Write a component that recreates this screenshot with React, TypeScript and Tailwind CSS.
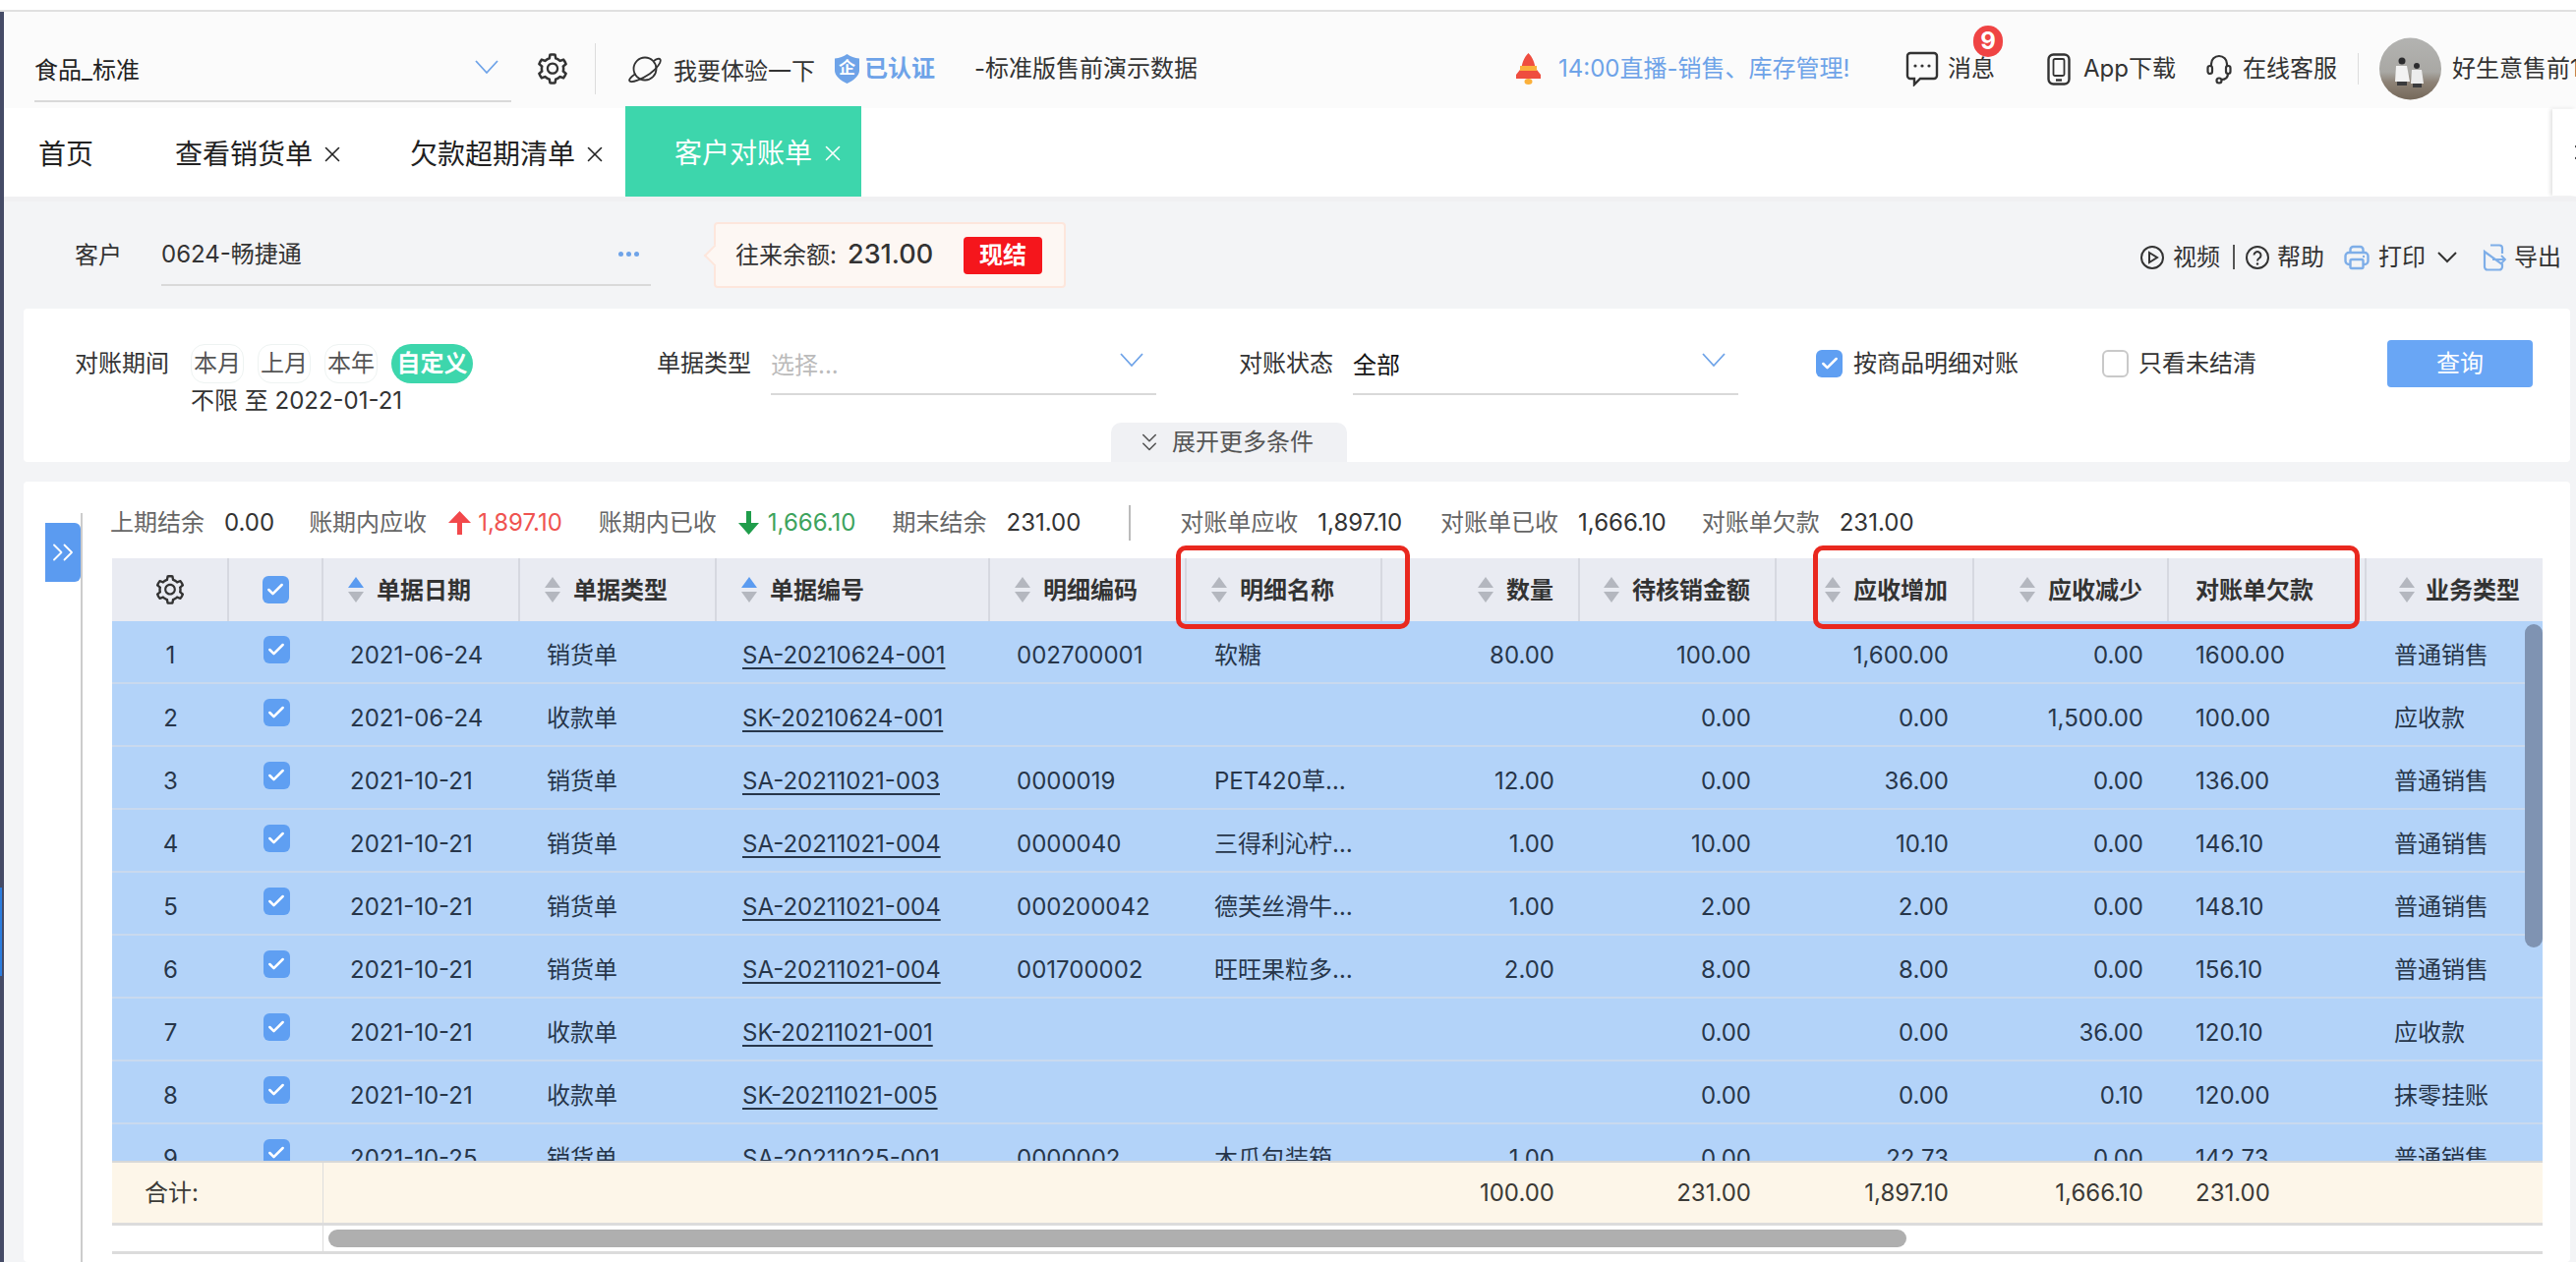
import React from "react";
import { AiOutlineSetting } from "react-icons/ai";
import { Check, ChevronRight, ChevronsDown, ChevronsRight, X } from "lucide-react";

type Row = {
  no: number;
  date: string;
  type: string;
  code: string;
  item: string;
  name: string;
  qty: string;
  pending: string;
  add: string;
  sub: string;
  owed: string;
  biz: string;
};

const rows: Row[] = [
  { no: 1, date: "2021-06-24", type: "销货单", code: "SA-20210624-001", item: "002700001", name: "软糖", qty: "80.00", pending: "100.00", add: "1,600.00", sub: "0.00", owed: "1600.00", biz: "普通销售" },
  { no: 2, date: "2021-06-24", type: "收款单", code: "SK-20210624-001", item: "", name: "", qty: "", pending: "0.00", add: "0.00", sub: "1,500.00", owed: "100.00", biz: "应收款" },
  { no: 3, date: "2021-10-21", type: "销货单", code: "SA-20211021-003", item: "0000019", name: "PET420草…", qty: "12.00", pending: "0.00", add: "36.00", sub: "0.00", owed: "136.00", biz: "普通销售" },
  { no: 4, date: "2021-10-21", type: "销货单", code: "SA-20211021-004", item: "0000040", name: "三得利沁柠…", qty: "1.00", pending: "10.00", add: "10.10", sub: "0.00", owed: "146.10", biz: "普通销售" },
  { no: 5, date: "2021-10-21", type: "销货单", code: "SA-20211021-004", item: "000200042", name: "德芙丝滑牛…", qty: "1.00", pending: "2.00", add: "2.00", sub: "0.00", owed: "148.10", biz: "普通销售" },
  { no: 6, date: "2021-10-21", type: "销货单", code: "SA-20211021-004", item: "001700002", name: "旺旺果粒多…", qty: "2.00", pending: "8.00", add: "8.00", sub: "0.00", owed: "156.10", biz: "普通销售" },
  { no: 7, date: "2021-10-21", type: "收款单", code: "SK-20211021-001", item: "", name: "", qty: "", pending: "0.00", add: "0.00", sub: "36.00", owed: "120.10", biz: "应收款" },
  { no: 8, date: "2021-10-21", type: "收款单", code: "SK-20211021-005", item: "", name: "", qty: "", pending: "0.00", add: "0.00", sub: "0.10", owed: "120.00", biz: "抹零挂账" },
  { no: 9, date: "2021-10-25", type: "销货单", code: "SA-20211025-001", item: "0000002", name: "木瓜包装箱", qty: "1.00", pending: "0.00", add: "22.73", sub: "0.00", owed: "142.73", biz: "普通销售" },
];

const gridCols =
  "grid grid-cols-[119px_96px_200px_200px_278px_200px_199px_201px_200px_201px_198px_201px_179px]";

function Caret({ className = "" }: { className?: string }) {
  return (
    <svg width="26" height="16" viewBox="0 0 26 16" className={`shrink-0 ${className}`} fill="none" stroke="#6ea3e8" strokeWidth="1.8">
      <polyline points="2,2 13,14 24,2" />
    </svg>
  );
}

function SortIcon({ active = false }: { active?: boolean }) {
  return (
    <svg width="16" height="26" viewBox="0 0 16 26" className="shrink-0">
      <polygon points="8,0 16,11 0,11" fill={active ? "#5b9bf0" : "#b4b7bf"} />
      <polygon points="0,15 16,15 8,26" fill="#b4b7bf" />
    </svg>
  );
}

function CheckBox({ checked = true, className = "" }: { checked?: boolean; className?: string }) {
  if (!checked) {
    return <span className={`h-[28px] w-[27px] shrink-0 rounded-[6px] border-2 border-[#c9c9c9] bg-white ${className}`} />;
  }
  return (
    <span className={`flex h-[28px] w-[27px] shrink-0 items-center justify-center rounded-[6px] bg-[#5f9ff2] ${className}`}>
      <Check size={20} color="#fff" strokeWidth={3} />
    </span>
  );
}

function Planet() {
  return (
    <svg width="34" height="30" viewBox="0 0 34 30" fill="none" stroke="#333" strokeWidth="1.800" className="ml-[33px]">
      <circle cx="17" cy="15" r="11.500" />
      <path d="M7.500 20C3 23 0 26 1.500 27.500 3.500 29.500 14 25.500 22 20 29 15 34 8 32.500 5.500 31.500 4 28.500 5 26 7" />
    </svg>
  );
}

function ShieldMark() {
  return (
    <svg width="25" height="30" viewBox="0 0 25 30" className="ml-[20px]">
      <path d="M12.500 0C16 2.500 20 4 25 4.500V17c0 5-6 10-12.500 13C6 27 0 22 0 17V4.500C5 4 9 2.500 12.500 0z" fill="#6ea3e8" />
      <text x="12.500" y="20" textAnchor="middle" fontSize="17" fontWeight="600" fill="#fff" fontFamily="Noto Sans CJK SC">企</text>
    </svg>
  );
}

function RocketBell() {
  return (
    <svg width="27" height="32" viewBox="0 0 27 32" className="ml-[328px]">
      <path d="M13.500 0C9 4 7 11 6.500 15L1 22v4h25v-4l-5.500-7C20 11 18 4 13.500 0z" fill="#ef4d3f" />
      <rect x="5" y="13" width="17" height="5" fill="#fbb03b" />
      <ellipse cx="13.500" cy="29" rx="4" ry="3" fill="#fbb03b" />
    </svg>
  );
}

function Message() {
  return (
    <svg width="34" height="36" viewBox="0 0 34 36" fill="none" stroke="#333" strokeWidth="2.400" className="ml-[49px]">
      <path d="M5 2h24a3 3 0 0 1 3 3v20a3 3 0 0 1-3 3H15l-6 6v-6H5a3 3 0 0 1-3-3V5a3 3 0 0 1 3-3z" />
      <circle cx="10" cy="15" r="1.600" fill="#333" stroke="none" />
      <circle cx="17" cy="15" r="1.600" fill="#333" stroke="none" />
      <circle cx="24" cy="15" r="1.600" fill="#333" stroke="none" />
    </svg>
  );
}

function Phone() {
  return (
    <svg width="24" height="33" viewBox="0 0 24 33" fill="none" stroke="#333" strokeWidth="2.400" className="ml-[53px]">
      <rect x="1.500" y="1.500" width="21" height="30" rx="5" />
      <rect x="6.500" y="6" width="11" height="17" rx="1.500" strokeWidth="1.800" />
      <line x1="9" y1="27.500" x2="15" y2="27.500" />
    </svg>
  );
}

function Headset() {
  return (
    <svg width="26" height="32" viewBox="0 0 26 32" fill="none" stroke="#333" strokeWidth="2.200" className="ml-[33px]">
      <path d="M5 14V11a8 8 0 0 1 16 0v3" />
      <rect x="1.500" y="13" width="4.500" height="8" rx="2.200" />
      <rect x="20" y="13" width="4.500" height="8" rx="2.200" />
      <path d="M22 21c0 4-3 6-7 6" />
      <circle cx="13" cy="28" r="2.500" />
    </svg>
  );
}

function Avatar() {
  return (
    <svg width="63" height="64" viewBox="0 0 63 64" className="ml-[21px]">
      <defs>
        <linearGradient id="sky" x1="0" y1="0" x2="0" y2="1">
          <stop offset="0" stopColor="#b3b3b1" />
          <stop offset="0.55" stopColor="#a9a8a4" />
          <stop offset="0.72" stopColor="#8d8276" />
          <stop offset="1" stopColor="#75685a" />
        </linearGradient>
      </defs>
      <circle cx="31.500" cy="32" r="31.500" fill="url(#sky)" />
      <circle cx="23" cy="24" r="3.500" fill="#2c2c2e" />
      <path d="M17 29h11l3 16H16z" fill="#f2f2f2" />
      <path d="M18 45h10v4H18z" fill="#3b3b3d" />
      <circle cx="38" cy="29" r="3" fill="#2c2c2e" />
      <path d="M33 33h10l2 14H32z" fill="#ececec" />
      <path d="M34 47h9v4h-9z" fill="#3b3b3d" />
    </svg>
  );
}

function PlayIcon() {
  return (
    <svg width="24" height="24" viewBox="0 0 24 24" fill="none" stroke="#333" strokeWidth="2">
      <circle cx="12" cy="12" r="11" />
      <polygon points="9,7 17,12 9,17" />
    </svg>
  );
}

function HelpIcon() {
  return (
    <svg width="24" height="24" viewBox="0 0 24 24" fill="none" stroke="#333" strokeWidth="2" className="ml-[11px]">
      <circle cx="12" cy="12" r="11" />
      <path d="M8.500 9.500a3.500 3.500 0 1 1 5.500 3c-1.300.9-2 1.500-2 3" />
      <circle cx="12" cy="18.500" r="1.200" fill="#333" stroke="none" />
    </svg>
  );
}

function PrintIcon() {
  return (
    <svg width="26" height="26" viewBox="0 0 26 26" fill="none" stroke="#7eaee8" strokeWidth="2.400" className="ml-[20px]">
      <path d="M6.500 8V5a3 3 0 0 1 3-3h7a3 3 0 0 1 3 3v3" />
      <path d="M6 20H5a3.500 3.500 0 0 1-3.500-3.500v-5A3.500 3.500 0 0 1 5 8h16a3.500 3.500 0 0 1 3.500 3.500v5A3.500 3.500 0 0 1 21 20h-1" />
      <rect x="6.500" y="15" width="13" height="9" rx="1.500" />
      <circle cx="20" cy="12" r="1.200" fill="#7eaee8" stroke="none" />
    </svg>
  );
}

function ExportIcon() {
  return (
    <svg width="25" height="28" viewBox="0 0 25 28" fill="none" stroke="#7eaee8" strokeWidth="2.200" className="ml-[25px]">
      <path d="M8 1.500h9a3 3 0 0 1 3 3V10M20 21v2.500a3 3 0 0 1-3 3H5a3 3 0 0 1-3-3V8z" />
      <path d="M10 16h13M19 12l4 4-4 4" strokeWidth="1.800" />
    </svg>
  );
}

function UpArrow() {
  return (
    <svg width="23" height="24" viewBox="0 0 23 24" className="ml-[22px]">
      <polygon points="11.500,0 23,12 14,12 14,24 9,24 9,12 0,12" fill="#f2484b" />
    </svg>
  );
}

function DownArrow() {
  return (
    <svg width="21" height="24" viewBox="0 0 21 24" className="ml-[22px]">
      <polygon points="8,0 13,0 13,12 21,12 10.500,24 0,12 8,12" fill="#1f9d4b" />
    </svg>
  );
}

function Pill({ label, active = false }: { label: string; active?: boolean }) {
  if (active) {
    return (
      <span className="flex h-[40px] w-[83px] items-center justify-center rounded-[20px] bg-[#3dd6ac] text-[24px] font-semibold text-white">
        {label}
      </span>
    );
  }
  return (
    <span className="flex h-[40px] w-[54px] items-center justify-center rounded-[14px] border border-[#eef3f2] text-[24px] text-[#555]">
      {label}
    </span>
  );
}

function HeadCell({ label, sort, active, right, pad }: { label: string; sort?: boolean; active?: boolean; right?: boolean; pad: string }) {
  return (
    <div className={`flex h-full items-center border-r-2 border-[#d6d8e0] ${right ? "justify-end" : ""} ${pad}`}>
      {sort && <SortIcon active={active} />}
      <span className="ml-[13px] whitespace-nowrap pt-[2px] text-[24px] font-semibold text-[#333]">{label}</span>
    </div>
  );
}

export default function App() {
  return (
    <div className="relative flex h-[1284px] w-[2620px] flex-col overflow-hidden bg-white font-['Inter','Noto_Sans_CJK_SC',sans-serif] text-[24px] text-[#333]">
      <div className="h-[12px] shrink-0 border-b-2 border-[#e0e0e0] bg-white" />
      <div className="flex min-h-0 flex-1 flex-col border-l-4 border-[#454b66] bg-[#f3f4f6]">
        {/* top bar */}
        <div className="flex h-[98px] shrink-0 items-center overflow-hidden bg-[#fbfbfb] pt-[18px] pl-[31px] [&>*]:shrink-0">
          <div className="mt-[22px] flex h-[52px] w-[485px] items-start justify-between self-start border-b-2 border-[#d9d9d9] pr-[12px]">
            <span className="text-[24px] leading-[40px] text-[#222]">食品_标准</span>
            <Caret className="mt-[8px]" />
          </div>
          <AiOutlineSetting size={36} color="#333" className="ml-[24px]" />
          <span className="ml-[25px] h-[52px] w-px bg-[#ddd]" />
          <Planet />
          <span className="ml-[12px] mt-[5px] w-[144px] whitespace-nowrap">我要体验一下</span>
          <ShieldMark />
          <span className="ml-[5px] w-[72px] whitespace-nowrap font-semibold text-[#6ea3e8]">已认证</span>
          <span className="ml-[40px] w-[222px] whitespace-nowrap">-标准版售前演示数据</span>
          <RocketBell />
          <span className="ml-[17px] w-[304px] whitespace-nowrap text-[#6ea3e8]">14:00直播-销售、库存管理!</span>
          <Message />
          <span className="relative ml-[9px] w-[48px] whitespace-nowrap">
            消息
            <span className="absolute left-[26px] top-[-26px] flex h-[32px] w-[30px] items-center justify-center rounded-full bg-[#ef4444] text-[24px] font-bold text-white">
              9
            </span>
          </span>
          <Phone />
          <span className="ml-[13px] w-[92px] whitespace-nowrap">App下载</span>
          <Headset />
          <span className="ml-[11px] w-[98px] whitespace-nowrap">在线客服</span>
          <span className="ml-[19px] h-[32px] w-px bg-[#ddd]" />
          <Avatar />
          <span className="ml-[11px] whitespace-nowrap">好生意售前1</span>
        </div>

        {/* tabs */}
        <div className="flex h-[90px] shrink-0 items-center bg-white pl-[35px] text-[28px] text-[#222]">
          <span className="w-[56px] whitespace-nowrap pt-[4px]">首页</span>
          <span className="ml-[83px] whitespace-nowrap pt-[4px]">查看销货单</span>
          <X size={26} strokeWidth={1.5} className="ml-[7px] mt-[4px]" />
          <span className="ml-[66px] whitespace-nowrap pt-[4px]">欠款超期清单</span>
          <X size={26} strokeWidth={1.5} className="ml-[7px] mt-[4px]" />
          <div className="ml-[18px] mt-[-2px] flex h-[92px] w-[240px] items-center self-end bg-[#3dd6ac] pl-[50px] text-white">
            <span className="whitespace-nowrap pt-[4px]">客户对账单</span>
            <X size={26} strokeWidth={1.5} className="ml-[8px] mt-[4px]" />
          </div>
          <div className="ml-auto flex h-[88px] w-[24px] items-center overflow-hidden bg-white pl-[15px] shadow-[-2px_0_4px_rgba(0,0,0,0.12)]">
            <ChevronRight size={24} className="shrink-0" />
          </div>
        </div>
        <div className="h-[5px] shrink-0 bg-[#f0f0f2]" />

        {/* customer row */}
        <div className="flex h-[109px] shrink-0 items-center pl-[72px] pr-[15px]">
          <span className="w-[48px]">客户</span>
          <div className="ml-[40px] flex h-[62px] w-[498px] items-center justify-between border-b-2 border-[#d9d9d9] pr-[12px]">
            <span>0624-畅捷通</span>
            <span className="flex gap-[3px]">
              <i className="h-[5px] w-[5px] rounded-full bg-[#6ea3e8]" />
              <i className="h-[5px] w-[5px] rounded-full bg-[#6ea3e8]" />
              <i className="h-[5px] w-[5px] rounded-full bg-[#6ea3e8]" />
            </span>
          </div>
          <div className="relative ml-[64px] flex h-[67px] w-[358px] items-center rounded-[4px] border-2 border-[#fde6dc] bg-[#fdf7f3] pl-[20px]">
            <span className="absolute left-[-9px] top-[24px] h-[16px] w-[16px] rotate-45 border-b-2 border-l-2 border-[#fde6dc] bg-[#fdf7f3]" />
            <span className="w-[100px] whitespace-nowrap">往来余额:</span>
            <span className="ml-[14px] w-[86px] text-[27px] font-medium">231.00</span>
            <span className="ml-[32px] flex h-[38px] w-[80px] items-center justify-center rounded-[4px] bg-[#f5161c] font-semibold text-white">现结</span>
          </div>
          <div className="ml-auto flex items-center pt-[4px]">
            <PlayIcon />
            <span className="ml-[9px]">视频</span>
            <span className="ml-[13px] h-[25px] w-[2px] bg-[#555]" />
            <HelpIcon />
            <span className="ml-[8px]">帮助</span>
            <PrintIcon />
            <span className="ml-[9px]">打印</span>
            <svg width="22" height="13" viewBox="0 0 22 13" fill="none" stroke="#333" strokeWidth="2" className="ml-[11px]">
              <polyline points="2,2 11,11 20,2" />
            </svg>
            <ExportIcon />
            <span className="ml-[7px]">导出</span>
          </div>
        </div>

        {/* filter card */}
        <div className="ml-[20px] flex h-[156px] w-[2590px] shrink-0 flex-col rounded-[4px] bg-white">
          <div className="flex h-[116px] items-start pl-[52px] pt-[36px]">
            <span className="w-[96px] leading-[40px]">对账期间</span>
            <div className="ml-[22px]">
              <div className="flex gap-[14px]">
                <Pill label="本月" />
                <Pill label="上月" />
                <Pill label="本年" />
                <Pill label="自定义" active />
              </div>
              <div className="whitespace-nowrap leading-[36px]">不限 至 2022-01-21</div>
            </div>
            <span className="ml-[187px] w-[96px] leading-[40px]">单据类型</span>
            <div className="ml-[20px] flex h-[52px] w-[392px] items-start justify-between border-b-2 border-[#d9d9d9] pr-[12px]">
              <span className="leading-[44px] text-[#bbb]">选择...</span>
              <Caret className="mt-[8px]" />
            </div>
            <span className="ml-[84px] w-[96px] leading-[40px]">对账状态</span>
            <div className="ml-[20px] flex h-[52px] w-[392px] items-start justify-between border-b-2 border-[#d9d9d9] pr-[12px]">
              <span className="leading-[44px] text-[#111]">全部</span>
              <Caret className="mt-[8px]" />
            </div>
            <CheckBox className="ml-[79px] mt-[6px]" />
            <span className="ml-[11px] w-[168px] whitespace-nowrap leading-[40px]">按商品明细对账</span>
            <CheckBox checked={false} className="ml-[85px] mt-[6px]" />
            <span className="ml-[10px] w-[120px] whitespace-nowrap leading-[40px]">只看未结清</span>
            <button className="ml-[133px] mt-[-4px] h-[48px] w-[148px] rounded-[4px] bg-[#69a6f5] text-[24px] text-white">查询</button>
          </div>
          <div className="flex flex-1 pl-[1106px]">
            <div className="flex h-[40px] w-[240px] items-center gap-[8px] rounded-t-[10px] bg-[#f0f1f4] pl-[24px] text-[#555]">
              <ChevronsDown size={30} strokeWidth={1.3} />
              <span className="whitespace-nowrap">展开更多条件</span>
            </div>
          </div>
        </div>

        {/* table card */}
        <div className="ml-[20px] mt-[20px] flex min-h-0 w-[2590px] flex-1 rounded-[4px] bg-white">
          <div className="ml-[22px] mt-[32px] w-[38px] shrink-0 border-r-2 border-[#cccccc]">
            <div className="mt-[10px] flex h-[60px] w-[36px] items-center justify-center rounded-r-[6px] bg-[#5b9bf0]">
              <ChevronsRight size={36} color="#fff" strokeWidth={1.2} />
            </div>
          </div>
          <div className="ml-[30px] w-[2472px] shrink-0">
            <div className="mt-[24px] flex h-[36px] items-center whitespace-nowrap text-[#666]">
              <span className="ml-[-2px]">上期结余</span>
              <span className="ml-[20px] text-[#333]">0.00</span>
              <span className="ml-[35px]">账期内应收</span>
              <UpArrow />
              <span className="ml-[7px] text-[#ef5350]">1,897.10</span>
              <span className="ml-[37px]">账期内已收</span>
              <DownArrow />
              <span className="ml-[9px] text-[#3da35d]">1,666.10</span>
              <span className="ml-[37px]">期末结余</span>
              <span className="ml-[20px] text-[#333]">231.00</span>
              <span className="ml-[49px] h-[36px] w-[2px] bg-[#bbb]" />
              <span className="ml-[50px]">对账单应收</span>
              <span className="ml-[20px] text-[#333]">1,897.10</span>
              <span className="ml-[39px]">对账单已收</span>
              <span className="ml-[20px] text-[#333]">1,666.10</span>
              <span className="ml-[36px]">对账单欠款</span>
              <span className="ml-[20px] text-[#333]">231.00</span>
            </div>

            <div className="relative mt-[18px]">
              {/* header */}
              <div className={`${gridCols} h-[64px] bg-[#e9ebf2]`}>
                <div className="flex items-center justify-center border-r-2 border-[#d6d8e0]">
                  <AiOutlineSetting size={34} color="#333" />
                </div>
                <div className="flex items-center justify-center border-r-2 border-[#d6d8e0]">
                  <CheckBox />
                </div>
                <HeadCell label="单据日期" sort active pad="pl-[25px]" />
                <HeadCell label="单据类型" sort pad="pl-[25px]" />
                <HeadCell label="单据编号" sort active pad="pl-[25px]" />
                <HeadCell label="明细编码" sort pad="pl-[25px]" />
                <HeadCell label="明细名称" sort pad="pl-[25px]" />
                <HeadCell label="数量" sort right pad="pr-[25px]" />
                <HeadCell label="待核销金额" sort right pad="pr-[25px]" />
                <HeadCell label="应收增加" sort right pad="pr-[25px]" />
                <HeadCell label="应收减少" sort right pad="pr-[25px]" />
                <HeadCell label="对账单欠款" pad="pl-[14px]" />
                <div className="flex items-center pl-[33px]">
                  <SortIcon />
                  <span className="ml-[4px] pl-[7px] whitespace-nowrap pt-[2px] font-semibold">业务类型</span>
                </div>
              </div>

              {/* rows */}
              <div className="relative h-[549px] overflow-hidden bg-[#b3d3f9] text-[#27364a]">
                {rows.map((r) => (
                  <div key={r.no} className={`${gridCols} h-[64px] items-center whitespace-nowrap border-b-2 border-[#c9d9ee] pt-[7px]`}>
                    <span className="text-center">{r.no}</span>
                    <span className="flex justify-center pb-[12px]">
                      <CheckBox />
                    </span>
                    <span className="pl-[27px]">{r.date}</span>
                    <span className="pl-[27px]">{r.type}</span>
                    <span className="pl-[26px] underline underline-offset-4">{r.code}</span>
                    <span className="pl-[27px]">{r.item}</span>
                    <span className="pl-[28px]">{r.name}</span>
                    <span className="pr-[26px] text-right">{r.qty}</span>
                    <span className="pr-[26px] text-right">{r.pending}</span>
                    <span className="pr-[26px] text-right">{r.add}</span>
                    <span className="pr-[26px] text-right">{r.sub}</span>
                    <span className="pl-[27px]">{r.owed}</span>
                    <span className="pl-[28px]">{r.biz}</span>
                  </div>
                ))}
                <div className="absolute right-0 top-[3px] h-[329px] w-[18px] rounded-[9px] bg-[#7f93b2]" />
              </div>

              {/* totals */}
              <div className={`${gridCols} h-[63px] items-center border-t-2 border-[#d8d8d8] bg-[#fdf6e9] text-[#3b3a36]`}>
                <span className="col-span-2 flex h-full items-center border-r border-[#ddd] pl-[33px]">合计:</span>
                <span className="col-span-5" />
                <span className="pr-[26px] text-right">100.00</span>
                <span className="pr-[26px] text-right">231.00</span>
                <span className="pr-[26px] text-right">1,897.10</span>
                <span className="pr-[26px] text-right">1,666.10</span>
                <span className="pl-[27px]">231.00</span>
                <span />
              </div>

              {/* horizontal scrollbar */}
              <div className="flex h-[32px] items-center border-y-[3px] border-[#dcdcdc]">
                <div className="h-full w-[215px] border-r border-[#ddd]" />
                <div className="ml-[5px] h-[18px] w-[1605px] rounded-[9px] bg-[#afafaf]" />
              </div>

              {/* red annotation boxes */}
              <div className="absolute left-[1082px] top-[-13px] h-[85px] w-[238px] rounded-[10px] border-[5px] border-[#e9281f]" />
              <div className="absolute left-[1730px] top-[-13px] h-[85px] w-[556px] rounded-[10px] border-[5px] border-[#e9281f]" />
            </div>
          </div>
        </div>
      </div>
      {/* window edge behind the page */}
      <div className="absolute left-0 top-[903px] h-[90px] w-[2px] bg-[#2b7de0]" />
    </div>
  );
}
